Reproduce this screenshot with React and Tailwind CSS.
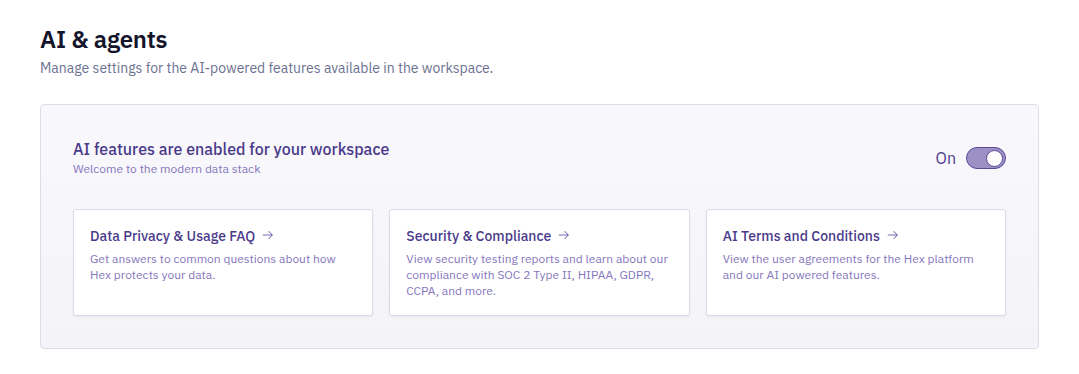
import React from "react";

function Arrow() {
  return (
    <svg width="14" height="14" viewBox="0 0 16 16" fill="none" className="inline-block ml-1.5 align-[-1px]">
      <path d="M2.5 8h10.5M9 4l4 4-4 4" stroke="#7c6db3" strokeWidth="1.2" strokeLinecap="round" strokeLinejoin="round" />
    </svg>
  );
}

function Card({ title, desc }) {
  return (
    <div className="bg-white border border-[#dcdae6] rounded-[3px] px-4 pt-[16px] pb-4 h-[107px] shadow-[0_1px_2px_rgba(60,50,120,0.06)]">
      <div className="text-[14px] leading-[20px] font-medium text-[#4a3a8a]">
        {title}
        <Arrow />
      </div>
      <div className="mt-[5px] text-[12px] leading-[16px] text-[#8576bd]">{desc}</div>
    </div>
  );
}

export default function App() {
  return (
    <div className="min-h-[374px] bg-white px-10 pt-[24px] font-['IBM_Plex_Sans','Inter',sans-serif]">
      <h1 className="text-[24px] leading-[30px] font-semibold text-[#14142b] tracking-[-0.2px]">AI &amp; agents</h1>
      <p className="mt-[4px] text-[14px] leading-[20px] text-[#6c7191]">
        Manage settings for the AI-powered features available in the workspace.
      </p>
      <div className="mt-[26px] w-[999px] border border-[#dedce8] rounded-[4px] bg-gradient-to-b from-[#f9f8fc] to-[#f4f3f8] px-8 pt-8 pb-8">
        <div className="flex items-start justify-between">
          <div>
            <div className="text-[16px] leading-[24px] font-medium text-[#4a3a8a]">
              AI features are enabled for your workspace
            </div>
            <div className="text-[12px] leading-[16px] text-[#8576bd]">Welcome to the modern data stack</div>
          </div>
          <div className="flex items-center gap-[10px] mt-[9px]">
            <span className="text-[16px] text-[#4a3a8a]">On</span>
            <div className="w-[40px] h-[22px] rounded-full bg-[#9d90c5] border border-[#5a4a99] flex items-center justify-end px-[2px]">
              <div className="w-[17px] h-[17px] rounded-full bg-white border border-[#5a4a99]" />
            </div>
          </div>
        </div>
        <div className="mt-8 grid grid-cols-3 gap-4">
          <Card title="Data Privacy & Usage FAQ" desc="Get answers to common questions about how Hex protects your data." />
          <Card title="Security & Compliance" desc="View security testing reports and learn about our compliance with SOC 2 Type II, HIPAA, GDPR, CCPA, and more." />
          <Card title="AI Terms and Conditions" desc="View the user agreements for the Hex platform and our AI powered features." />
        </div>
      </div>
    </div>
  );
}
